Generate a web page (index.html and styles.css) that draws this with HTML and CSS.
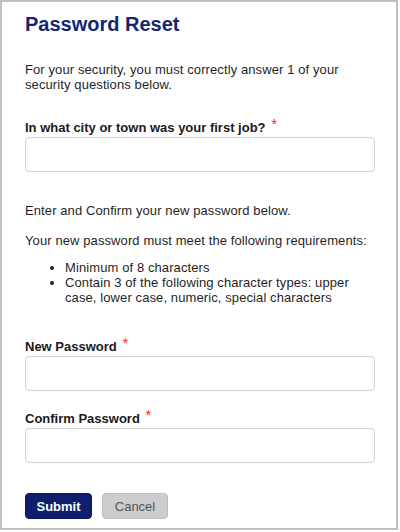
FILE: index.html
```html
<!DOCTYPE html>
<html>
<head>
<meta charset="utf-8">
<link rel="stylesheet" href="styles.css">
</head>
<body>
<div class="panel">
  <h1 class="title">Password Reset</h1>
  <p class="text intro">For your security, you must correctly answer 1 of your security questions below.</p>
  <div class="field first">
    <label class="label">In what city or town was your first job? <span class="req">*</span></label>
    <input class="input" type="text">
  </div>
  <p class="text enter">Enter and Confirm your new password below.</p>
  <p class="text reqs">Your new password must meet the following requirements:</p>
  <ul class="list">
    <li>Minimum of 8 characters</li>
    <li>Contain 3 of the following character types: upper case, lower case, numeric, special characters</li>
  </ul>
  <div class="field newpw">
    <label class="label">New Password <span class="req">*</span></label>
    <input class="input" type="password">
  </div>
  <div class="field confirm">
    <label class="label">Confirm Password <span class="req">*</span></label>
    <input class="input" type="password">
  </div>
  <div class="actions">
    <button class="btn primary">Submit</button>
    <button class="btn secondary">Cancel</button>
  </div>
</div>
</body>
</html>
```
FILE: styles.css
```css
html, body {
  margin: 0;
  padding: 0;
  background: #fff;
}
body {
  font-family: "Liberation Sans", Arial, sans-serif;
  font-size: 13px;
  color: #1f1f1f;
}
.panel {
  box-sizing: border-box;
  width: 398px;
  height: 530px;
  border: 2px solid #c0c0c0;
  padding: 10px 23px 0 23px;
}
.title {
  margin: 0;
  font-size: 20px;
  line-height: 24px;
  font-weight: bold;
  color: #142673;
}
.text {
  margin: 0;
  line-height: 15px;
  letter-spacing: 0.1px;
}
.intro {
  margin-top: 26px;
}
.field {
  display: flex;
  flex-direction: column;
}
.first {
  margin-top: 28px;
}
.label {
  font-weight: bold;
  line-height: 15px;
  margin-bottom: 2px;
  color: #1a1a1a;
}
.req {
  color: #e8321f;
  font-weight: normal;
  font-size: 15px;
  line-height: 0;
  vertical-align: 3px;
  margin-left: 2px;
}
.input {
  box-sizing: border-box;
  width: 350px;
  height: 35px;
  margin: 0;
  border: 1px solid #cfcfcf;
  border-radius: 4px;
  background: #fff;
  outline: none;
}
.enter {
  margin-top: 31px;
}
.reqs {
  margin-top: 15px;
}
.list {
  margin: 12px 0 0 0;
  padding-left: 40px;
  line-height: 15px;
  letter-spacing: 0.1px;
}
.newpw {
  margin-top: 34px;
}
.confirm {
  margin-top: 20px;
}
.actions {
  display: flex;
  gap: 10px;
  margin-top: 30px;
}
.btn {
  box-sizing: border-box;
  height: 26px;
  font-family: "Liberation Sans", Arial, sans-serif;
  font-size: 13px;
  border-radius: 4px;
  padding: 0 10px;
  cursor: pointer;
}
.primary {
  width: 67px;
  background: #0f1f6d;
  border: 1px solid #0a1656;
  color: #fff;
  font-weight: bold;
}
.secondary {
  width: 66px;
  background: #cdcdcd;
  border: 1px solid #bdbdbd;
  color: #555;
}
```
